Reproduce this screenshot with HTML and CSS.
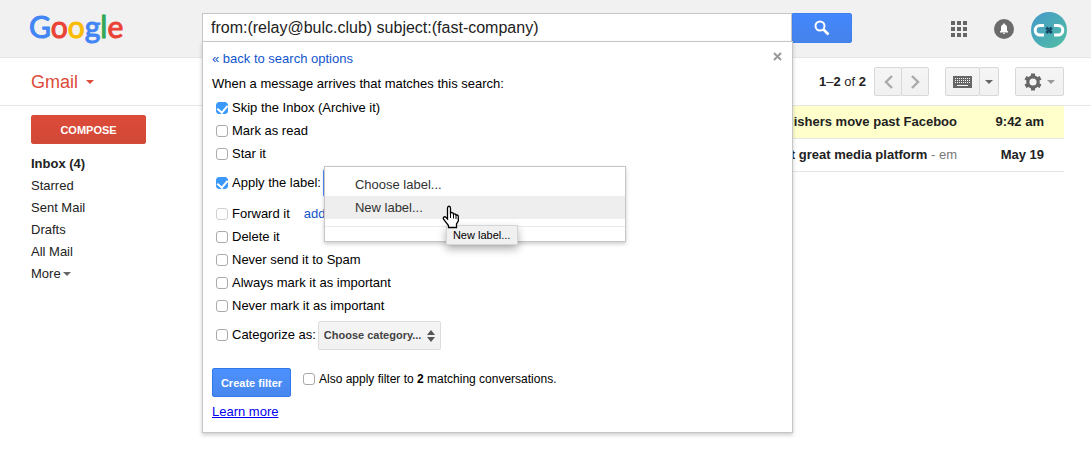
FILE: index.html
```html
<!DOCTYPE html>
<html lang="en">
<head>
<meta charset="utf-8">
<title>Gmail</title>
<link rel="stylesheet" href="styles.css">
</head>
<body>
<header class="topbar">
  <a class="logo" href="#" aria-label="Google"><span class="blue">G</span><span class="red">o</span><span class="yellow">o</span><span class="blue">g</span><span class="green">l</span><span class="red">e</span></a>
  <form class="search">
    <div class="search-box">
      <input class="search-input" type="text" aria-label="Search mail" value="from:(relay@bulc.club) subject:(fast-company)">
      <section class="panel">
        <button class="panel-close" type="button" aria-label="Close">
          <svg width="9" height="9" viewBox="0 0 9 9"><path d="M1 1l7 7M8 1L1 8" stroke="#999" stroke-width="2"/></svg>
        </button>
        <a class="back" href="#">« back to search options</a>
        <p class="intro">When a message arrives that matches this search:</p>
        <div class="row"><label><input type="checkbox" checked>Skip the Inbox (Archive it)</label></div>
        <div class="row"><label><input type="checkbox">Mark as read</label></div>
        <div class="row"><label><input type="checkbox">Star it</label></div>
        <div class="row tall">
          <label><input type="checkbox" checked>Apply the label:</label>
          <div class="label-picker">
            <button class="picker-button" type="button" aria-label="Label"></button>
            <div class="menu" role="menu">
              <button class="menu-item" type="button" role="menuitem">Choose label...</button>
              <button class="menu-item active" type="button" role="menuitem">New label...</button>
              <hr>
              <div class="tooltip" role="tooltip">New label...</div>
              <svg class="pointer" width="18" height="24" viewBox="0 0 18 24"><path d="M5.500 14V3.200C5.500 .6 8.500 .6 8.500 3.200V9C8.500 7 11.500 7 11.500 9.200V10C11.500 8.300 14 8.400 14 10.200V11C14 9.500 16.300 9.700 16.300 11.500V16L14.500 19V22.500H6.500V20.500L1.700 14.500C.5 12.500 2.300 11 3.800 12.300Z" fill="#fff" stroke="#000" stroke-width="1.300"/><path d="M8.500 9v4M11.500 10v3.500M14 11v3" stroke="#000"/></svg>
            </div>
          </div>
        </div>
        <div class="row"><label><input type="checkbox" disabled>Forward it</label><a class="add" href="#">add</a></div>
        <div class="row"><label><input type="checkbox">Delete it</label></div>
        <div class="row"><label><input type="checkbox">Never send it to Spam</label></div>
        <div class="row"><label><input type="checkbox">Always mark it as important</label></div>
        <div class="row"><label><input type="checkbox">Never mark it as important</label></div>
        <div class="row tall">
          <label><input type="checkbox">Categorize as:</label>
          <div class="select-wrap">
            <select class="category" aria-label="Category"><option>Choose category...</option></select>
            <svg class="arrows" width="8" height="12" viewBox="0 0 8 12"><path d="M0 5l4-5 4 5zM0 7l4 5 4-5z" fill="#555"/></svg>
          </div>
        </div>
        <div class="actions">
          <button class="create" type="button">Create filter</button>
          <label><input type="checkbox">Also apply filter to&nbsp;<b>2</b>&nbsp;matching conversations.</label>
        </div>
        <a class="learn" href="#">Learn more</a>
      </section>
    </div>
    <button class="search-button" type="button" aria-label="Search">
      <svg width="16" height="16" viewBox="0 0 16 16" fill="none" stroke="#fff"><circle cx="6" cy="6" r="4.500" stroke-width="2"/><path d="M9.500 9.500L14.500 14.500" stroke-width="2.600"/></svg>
    </button>
  </form>
  <nav class="account">
    <button type="button" aria-label="Apps">
      <svg width="16" height="16" viewBox="0 0 16 16" fill="#666"><path d="M0 0h4v4H0zM6 0h4v4H6zM12 0h4v4h-4zM0 6h4v4H0zM6 6h4v4H6zM12 6h4v4h-4zM0 12h4v4H0zM6 12h4v4H6zM12 12h4v4h-4z"/></svg>
    </button>
    <button class="bell" type="button" aria-label="Notifications">
      <svg width="20" height="20" viewBox="0 0 20 20"><circle cx="10" cy="10" r="10" fill="#6b6b6b"/><path d="M6 13.500v-1l1-1V8.500C7 6.800 8 5.900 9.200 5.600V5a.8.8 0 0 1 1.600 0v.6C12 5.900 13 6.800 13 8.500V11.500l1 1v1zM9 14h2a1 1 0 0 1-2 0z" fill="#fff"/></svg>
    </button>
    <button class="avatar" type="button" aria-label="Account">
      <svg width="36" height="36" viewBox="0 0 36 36">
        <defs><linearGradient id="teal" x1="0" y1="0" x2="1" y2="1"><stop offset=".15" stop-color="#469ec5"/><stop offset=".85" stop-color="#50b9a8"/></linearGradient></defs>
        <circle cx="18" cy="18" r="18" fill="url(#teal)"/>
        <path d="M13 13.500H9A4.800 4.800 0 0 0 9 23.100H13M23 13.500H27A4.800 4.800 0 0 1 27 23.100H23" fill="none" stroke="#fff" stroke-width="3"/>
        <path d="M15.300 15.600l5.400 5.400M20.700 15.600l-5.400 5.400" stroke="#174a64" stroke-width="3"/>
      </svg>
    </button>
  </nav>
</header>
<div class="toolbar">
  <button class="brand" type="button">Gmail<span class="caret"></span></button>
  <div class="tools">
    <span class="count"><b>1</b>–<b>2</b> of <b>2</b></span>
    <div class="group">
      <button class="tool narrow" type="button" aria-label="Newer"><svg width="9" height="14" viewBox="0 0 9 14"><path d="M8 1L2 7l6 6" fill="none" stroke="#aaa" stroke-width="2.400"/></svg></button>
      <button class="tool narrow" type="button" aria-label="Older"><svg width="9" height="14" viewBox="0 0 9 14"><path d="M1 1l6 6-6 6" fill="none" stroke="#aaa" stroke-width="2.400"/></svg></button>
    </div>
    <div class="group keyboard">
      <button class="tool wide" type="button" aria-label="Input tools"><svg width="19" height="12" viewBox="0 0 19 12"><path d="M0 0h19v12H0z" fill="#666"/><path d="M2 2.500h15M2 4.500h15M2 6.500h15" stroke="#f5f5f5" stroke-dasharray="1 1"/><path d="M4 9.500h11" stroke="#f5f5f5"/></svg></button>
      <button class="tool slim" type="button" aria-label="Select input tool"><span class="caret"></span></button>
    </div>
    <div class="group">
      <button class="tool settings" type="button" aria-label="Settings"><svg width="18" height="18" viewBox="0 0 18 18"><circle cx="9" cy="9" r="5.200" fill="none" stroke="#666" stroke-width="3.200"/><path d="M9 .5v2.500M9 15v2.500M1.500 4.700l2.300 1.300M14.200 12l2.300 1.300M1.500 13.300l2.300-1.300M14.200 6l2.300-1.300" stroke="#666" stroke-width="4"/></svg><span class="caret light"></span></button>
    </div>
  </div>
</div>
<div class="content">
  <aside class="sidebar">
    <button class="compose" type="button">COMPOSE</button>
    <nav class="folders">
      <a class="current" href="#">Inbox (4)</a>
      <a href="#">Starred</a>
      <a href="#">Sent Mail</a>
      <a href="#">Drafts</a>
      <a href="#">All Mail</a>
      <a href="#">More<span class="caret"></span></a>
    </nav>
  </aside>
  <main class="mail">
    <table>
      <tr class="selected"><td class="subject"><div><b>blishers move past Faceboo</b></div></td><td class="date">9:42 am</td></tr>
      <tr><td class="subject"><div><b>xt great media platform</b> - em</div></td><td class="date">May 19</td></tr>
    </table>
  </main>
</div>
</body>
</html>
```
FILE: styles.css
```css
* { box-sizing: border-box; }
body { margin: 0; min-height: 100vh; background: #fff; color: #222; font: 13px/16px "Liberation Sans", Arial, sans-serif; }
button { font: inherit; color: inherit; background: none; border: 0; padding: 0; }
a { color: #15c; text-decoration: none; }
svg { display: block; }
p { margin: 0; }

.topbar { display: flex; height: 58px; background: #f1f1f1; border-bottom: 1px solid #e5e5e5; }
.logo { width: 202px; flex: none; padding: 6px 0 0 29px; font: 30px/40px Lato, sans-serif; -webkit-text-stroke: 1px; }
.blue { color: #4285f4; }
.red { color: #ea4335; }
.yellow { color: #fbbc05; }
.green { color: #34a853; }

.search { display: flex; align-items: flex-start; flex: 1; max-width: 650px; padding-top: 13px; }
.search-box { position: relative; flex: 1; }
.search-input { display: block; width: 100%; height: 29px; padding: 0 8px; border: 1px solid #c6c6c6; border-bottom: 0; background: #fff; color: #222; font: 16px "Liberation Sans", Arial, sans-serif; outline: 0; }
.search-button { width: 60px; height: 30px; display: flex; align-items: center; justify-content: center; background: linear-gradient(#4387fd, #4683ea); border: 1px solid #3f80f0; border-radius: 0 2px 2px 0; }

.panel { position: absolute; z-index: 1; top: 28px; left: 0; right: -1px; padding: 9px 9px 12px; display: flex; flex-direction: column; align-items: flex-start; background: #fff; border: 1px solid #c6c6c6; box-shadow: 0 2px 4px rgba(0, 0, 0, .2); color: #000; }
.panel-close { position: absolute; top: 10px; right: 10px; }
.intro { margin: 9px 0 4px; }
.row { display: flex; align-items: center; height: 23px; padding-left: 4px; }
.row.tall { height: 36px; margin-bottom: 1px; }
label { display: flex; align-items: center; }
input[type="checkbox"] { appearance: none; width: 12px; height: 12px; margin: 0 4px 0 0; border: 1px solid #aaa; border-radius: 3px; background: #fff; }
input[type="checkbox"]:checked { border-color: #3b99fc; background: #3b99fc; }
input[type="checkbox"]:checked::after { content: ""; display: block; width: 5px; height: 8px; margin: 0 auto; border: solid #fff; border-width: 0 2px 2px 0; transform: rotate(40deg); }
input[type="checkbox"]:disabled { border-color: #d0d0d0; }
.add { margin-left: 14px; }

.label-picker { position: relative; margin-left: 2px; }
.picker-button { display: block; width: 120px; height: 28px; border: 1px solid #4d90fe; border-radius: 2px; background: #f5f5f5; }
.menu { position: absolute; z-index: 2; top: -3px; left: 1px; width: 302px; padding: 6px 0 14px; background: #fff; border: 1px solid #c6c6c6; box-shadow: 0 2px 4px rgba(0, 0, 0, .2); color: #333; }
.menu-item { display: block; width: 100%; height: 23px; padding-left: 30px; text-align: left; }
.menu-item.active { background: #eee; }
.menu hr { margin: 7px 0 0; border: 0; border-top: 1px solid #ebebeb; }
.tooltip { position: absolute; top: 58px; left: 121px; padding: 2px 7px 2px 6px; background: #f0f0f0; border: 1px solid #d5d5d5; box-shadow: 0 4px 8px rgba(0, 0, 0, .3); color: #000; font-size: 11px; line-height: 14px; white-space: nowrap; }
.pointer { position: absolute; top: 38px; left: 117px; }

.select-wrap { position: relative; margin-left: 2px; }
.category { appearance: none; display: block; width: 123px; height: 29px; padding: 0 5px; border: 1px solid #dcdcdc; border-radius: 2px; background: linear-gradient(#f5f5f5, #f1f1f1); color: #444; font: bold 11px "Liberation Sans", Arial, sans-serif; }
.arrows { position: absolute; top: 9px; right: 6px; pointer-events: none; }
.actions { display: flex; align-items: center; gap: 12px; margin-top: 14px; }
.actions label { font-size: 12px; padding-bottom: 8px; }
.create { width: 79px; height: 29px; background: linear-gradient(#4d90fe, #4787ed); border: 1px solid #3079ed; border-radius: 2px; color: #fff; font-size: 11px; font-weight: bold; }
.learn { margin-top: 7px; color: #00e; text-decoration: underline; }

.account { display: flex; align-items: center; margin-left: auto; padding-right: 24px; }
.bell { margin-left: 27px; }
.avatar { margin-left: 17px; padding-top: 2px; }

.toolbar { display: flex; align-items: center; justify-content: space-between; height: 48px; padding: 0 27px 0 31px; border-bottom: 1px solid #e5e5e5; }
.brand { display: flex; align-items: center; gap: 8px; color: #dd4b39; font-size: 18px; }
.caret { display: inline-block; border: solid transparent; border-width: 4px 4px 0; border-top-color: currentColor; }
.tools { display: flex; align-items: center; }
.count { margin-right: 8px; }
.group { display: flex; }
.keyboard { margin: 0 16px; }
.tool { display: flex; align-items: center; justify-content: center; height: 29px; border: 1px solid #d8d8d8; border-radius: 2px; background: linear-gradient(#f5f5f5, #f1f1f1); color: #666; }
.tool + .tool { margin-left: -1px; }
.narrow { width: 28px; }
.wide { width: 35px; }
.slim { width: 20px; }
.settings { width: 49px; gap: 5px; }
.light { color: #999; }

.content { display: flex; }
.sidebar { flex: none; width: 202px; padding: 9px 0 0 31px; }
.compose { width: 115px; height: 29px; background: linear-gradient(#dd4b39, #d14836); border: 1px solid #d64a38; border-radius: 2px; color: #fff; font-size: 11px; font-weight: bold; }
.folders { display: flex; flex-direction: column; margin-top: 9px; line-height: 22px; }
.folders a { display: flex; align-items: center; gap: 2px; color: #222; }
.folders .current { font-weight: bold; }
.folders .caret { color: #666; }

.mail { flex: 1; min-width: 0; padding-right: 27px; }
.mail table { width: 100%; border-spacing: 0; table-layout: fixed; }
.mail td { height: 33px; padding: 0; border-bottom: 1px solid #e5e5e5; }
.selected { background: #ffc; }
.mail .subject { color: #777; }
.subject div { display: flex; justify-content: flex-end; overflow: hidden; white-space: pre; }
.subject b { color: #222; }
.mail .date { width: 107px; padding-right: 20px; text-align: right; font-weight: bold; }
```
